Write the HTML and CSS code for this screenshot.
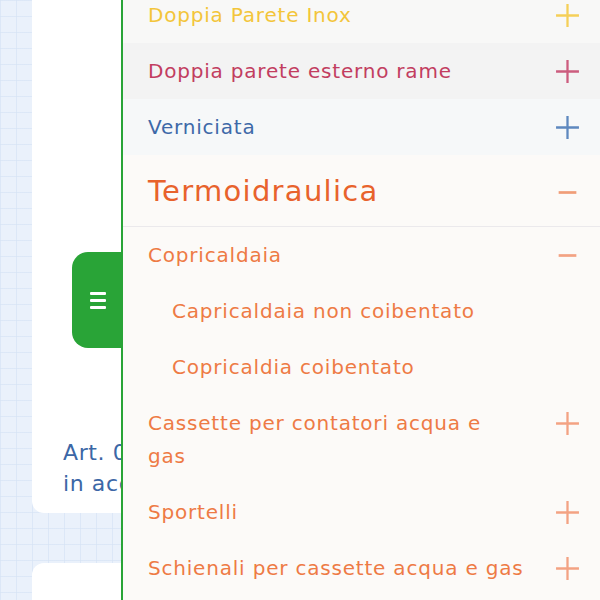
FILE: index.html
```html
<!DOCTYPE html>
<html lang="it">
<head>
<meta charset="utf-8">
<link rel="stylesheet" href="styles.css">
</head>
<body>
<div class="page">
  <div class="canvas">
    <div class="card card-top">
      <p class="card-text">Art. 0<br>in acciaio</p>
    </div>
    <div class="card card-bottom"></div>
    <button class="tab" aria-label="menu">
      <span class="bar"></span><span class="bar"></span><span class="bar"></span>
    </button>
  </div>
  <nav class="panel">
    <ul class="list">
      <li class="row row-yellow"><span class="label">Doppia Parete Inox</span><svg class="ico" viewBox="0 0 24 24"><path d="M12 1v22M1 12h22"/></svg></li>
      <li class="row row-red"><span class="label">Doppia parete esterno rame</span><svg class="ico" viewBox="0 0 24 24"><path d="M12 1v22M1 12h22"/></svg></li>
      <li class="row row-blue"><span class="label">Verniciata</span><svg class="ico" viewBox="0 0 24 24"><path d="M12 1v22M1 12h22"/></svg></li>
    </ul>
    <div class="section">
      <div class="section-head"><span class="label">Termoidraulica</span><svg class="ico ico-minus" viewBox="0 0 24 24"><path d="M3.5 12h17"/></svg></div>
      <ul class="list">
        <li class="row sub"><span class="label">Copricaldaia</span><svg class="ico ico-minus" viewBox="0 0 24 24"><path d="M3.5 12h17"/></svg></li>
        <li class="row sub deep"><span class="label">Capricaldaia non coibentato</span></li>
        <li class="row sub deep"><span class="label">Copricaldia coibentato</span></li>
        <li class="row sub"><span class="label">Cassette per contatori acqua e<br>gas</span><svg class="ico" viewBox="0 0 24 24"><path d="M12 1v22M1 12h22"/></svg></li>
        <li class="row sub"><span class="label">Sportelli</span><svg class="ico" viewBox="0 0 24 24"><path d="M12 1v22M1 12h22"/></svg></li>
        <li class="row sub"><span class="label">Schienali per cassette acqua e gas</span><svg class="ico" viewBox="0 0 24 24"><path d="M12 1v22M1 12h22"/></svg></li>
      </ul>
    </div>
  </nav>
</div>
</body>
</html>
```

FILE: styles.css
```css
* { box-sizing: border-box; }
html, body { margin: 0; padding: 0; }
body {
  width: 600px;
  height: 600px;
  overflow: hidden;
  font-family: "DejaVu Sans", "Open Sans", sans-serif;
  background: #fff;
}
.page {
  display: flex;
  width: 600px;
  height: 600px;
  overflow: hidden;
}
.canvas {
  position: relative;
  width: 121px;
  flex: none;
  padding-left: 32px;
  display: flex;
  flex-direction: column;
  gap: 50px;
  background-color: #eaf1fb;
  background-image:
    linear-gradient(to right, rgba(214,227,245,0.7) 1px, transparent 1px),
    linear-gradient(to bottom, rgba(214,227,245,0.7) 1px, transparent 1px);
  background-size: 16px 16px;
  overflow: hidden;
}
.card {
  width: 140px;
  background: #fff;
  flex: none;
  overflow: hidden;
}
.card-top {
  height: 513px;
  border-radius: 0 0 12px 12px;
  display: flex;
  align-items: flex-end;
  padding: 0 0 14px 31px;
}
.card-bottom {
  height: 60px;
  border-radius: 12px 12px 0 0;
}
.card-text {
  margin: 0;
  font-size: 22px;
  line-height: 31px;
  letter-spacing: 0.6px;
  color: #3c67a6;
  white-space: nowrap;
}
.tab {
  position: absolute;
  left: 72px;
  top: 252px;
  width: 51px;
  height: 96px;
  border: 0;
  padding: 0;
  border-radius: 16px 0 0 16px;
  background: #29a437;
  display: flex;
  flex-direction: column;
  align-items: center;
  justify-content: center;
  gap: 4px;
}
.bar {
  display: block;
  width: 16px;
  height: 3px;
  border-radius: 1px;
  background: #fff;
}
.panel {
  flex: 1;
  border-left: 2px solid #29a437;
  background: #fcfaf8;
  overflow: hidden;
}
.list {
  list-style: none;
  margin: 0;
  padding: 0;
}
.panel > .list { margin-top: -13px; }
.row {
  display: flex;
  align-items: flex-start;
  justify-content: space-between;
  gap: 16px;
  padding: 11.5px 20px 11.5px 25px;
  font-size: 20px;
  line-height: 33px;
  letter-spacing: 0.8px;
  min-height: 56px;
}
.label { max-width: 390px; }
.ico {
  flex: none;
  width: 25px;
  height: 25px;
  margin-top: 4px;
  fill: none;
  stroke: currentColor;
  stroke-width: 2.2;
}
.row-yellow { background: #f8f8f7; color: #f3c53a; }
.row-yellow .ico { color: #f5cf58; }
.row-red { background: #f3f3f3; color: #c23d60; }
.row-red .ico { color: #cc5c7e; }
.row-blue { background: #f6f8f9; color: #3e69a8; }
.row-blue .ico { color: #5e88bf; }
.section { background: #fcfaf8; }
.section-head {
  display: flex;
  align-items: center;
  justify-content: space-between;
  height: 72px;
  padding: 0 20px 0 25px;
  border-bottom: 1px solid #ebe9ec;
  font-size: 29px;
  letter-spacing: 1.3px;
  color: #e8622c;
}
.section-head .ico { margin-top: 4px; color: #f09d78; }
.sub { color: #ee7a45; }
.sub .ico { color: #f3a283; }
.ico-minus { stroke-width: 2.6; }
.deep { padding-left: 49px; }
```
